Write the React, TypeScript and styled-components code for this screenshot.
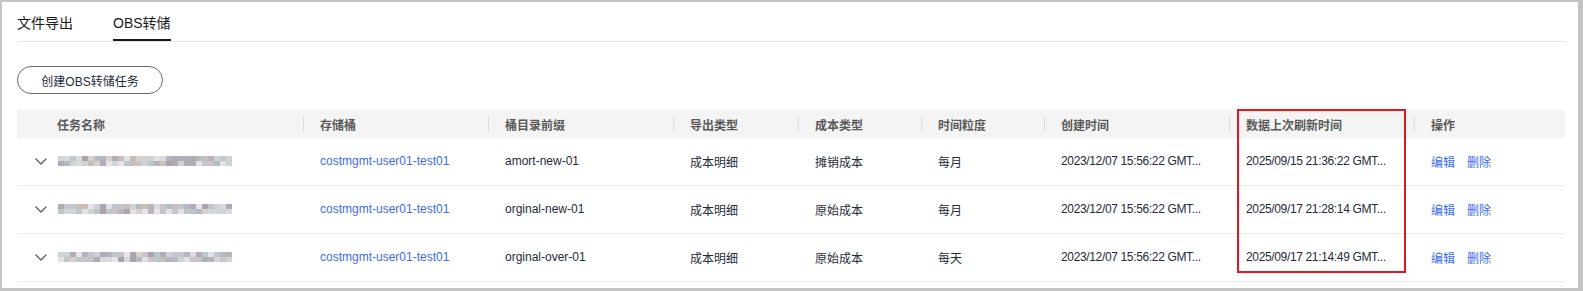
import React from 'react';
import styled, { createGlobalStyle } from 'styled-components';

const GlobalStyle = createGlobalStyle`
  html, body {
    margin: 0;
    padding: 0;
    background: #c4c4c4;
  }
  body {
    font-family: "Liberation Sans", Arial, "Noto Sans CJK SC", sans-serif;
    color: #252b3a;
  }
  * {
    box-sizing: border-box;
  }
`;

const cols = [
  { key: 'name', title: '任务名称', width: 286 },
  { key: 'bucket', title: '存储桶', width: 185 },
  { key: 'prefix', title: '桶目录前缀', width: 185 },
  { key: 'exportType', title: '导出类型', width: 125 },
  { key: 'costType', title: '成本类型', width: 123 },
  { key: 'period', title: '时间粒度', width: 123 },
  { key: 'created', title: '创建时间', width: 185 },
  { key: 'refreshed', title: '数据上次刷新时间', width: 185 },
  { key: 'ops', title: '操作', width: 151 },
];

const rows = [
  {
    seed: 3,
    prefix: 'amort-new-01',
    costType: '摊销成本',
    period: '每月',
    refreshed: '2025/09/15 21:36:22 GMT...',
  },
  {
    seed: 11,
    prefix: 'orginal-new-01',
    costType: '原始成本',
    period: '每月',
    refreshed: '2025/09/17 21:28:14 GMT...',
  },
  {
    seed: 29,
    prefix: 'orginal-over-01',
    costType: '原始成本',
    period: '每天',
    refreshed: '2025/09/17 21:14:49 GMT...',
  },
];

const palette = [
  '#b9b3bd', '#c9c4cc', '#aeb0b4', '#d3d6d6', '#bfc7c6', '#c8bfb8',
  '#d9d9de', '#a9a4ad', '#cfd3d8', '#e2e2e2', '#b7bcc4', '#d6d1cc',
  '#c2c6cc', '#e6e4e8', '#b2aab5', '#cdd5d4',
];

// pseudo-random mosaic for the masked task names
const mosaic = (seed: number) => {
  let s = seed * 9301 + 49297;
  const next = () => {
    s = (s * 9301 + 49297) % 233280;
    return s / 233280;
  };
  return Array.from({ length: 29 }, () => [
    palette[Math.floor(next() * palette.length)],
    palette[Math.floor(next() * palette.length)],
  ]);
};

const App = () => {
  return (
    <>
      <GlobalStyle />
      <Frame>
        <TabBar>
          <Tab>文件导出</Tab>
          <Tab $active>OBS转储</Tab>
        </TabBar>
        <CreateButton>创建OBS转储任务</CreateButton>
        <TableWrap>
          <HeadRow>
            {cols.map((c, i) => (
              <HeadCell key={c.key} $w={c.width} $first={i === 0}>
                {c.title}
              </HeadCell>
            ))}
          </HeadRow>
          {rows.map((r) => (
            <Row key={r.seed}>
              <Cell $w={cols[0].width} $first>
                <Chevron width="12" height="7" viewBox="0 0 12 7">
                  <polyline points="1,1 6,6 11,1" />
                </Chevron>
                <Masked>
                  {mosaic(r.seed).map(([top, bottom], i) => (
                    <MaskCol key={i}>
                      <MaskPixel $c={top} />
                      <MaskPixel $c={bottom} />
                    </MaskCol>
                  ))}
                </Masked>
              </Cell>
              <Cell $w={cols[1].width}>
                <Link>costmgmt-user01-test01</Link>
              </Cell>
              <Cell $w={cols[2].width}>{r.prefix}</Cell>
              <Cell $w={cols[3].width}>成本明细</Cell>
              <Cell $w={cols[4].width}>{r.costType}</Cell>
              <Cell $w={cols[5].width}>{r.period}</Cell>
              <Cell $w={cols[6].width}>
                <TimeText>2023/12/07 15:56:22 GMT...</TimeText>
              </Cell>
              <Cell $w={cols[7].width}>
                <TimeText>{r.refreshed}</TimeText>
              </Cell>
              <Cell $w={cols[8].width}>
                <Ops>
                  <Link>编辑</Link>
                  <Link>删除</Link>
                </Ops>
              </Cell>
            </Row>
          ))}
          <Highlight />
        </TableWrap>
      </Frame>
    </>
  );
};

export default App;

const Frame = styled.div`
  margin: 2px 5px 0 2px;
  height: 286px;
  background: #ffffff;
  padding: 0 11px 0 15px;
  overflow: hidden;
`;

const TabBar = styled.div`
  display: flex;
  gap: 40px;
  height: 40px;
  border-bottom: 1px solid #e6e6e6;
`;

const Tab = styled.div<{ $active?: boolean }>`
  display: flex;
  align-items: center;
  height: 39px;
  padding-top: 2px;
  font-size: 14px;
  color: #191919;
  border-bottom: 2px solid ${(p) => (p.$active ? '#191919' : 'transparent')};
`;

const CreateButton = styled.button`
  display: flex;
  align-items: center;
  justify-content: center;
  margin-top: 24px;
  width: 146px;
  height: 28px;
  padding: 0;
  border: 1px solid #6b6b6b;
  border-radius: 14px;
  background: #ffffff;
  color: #252b3a;
  font-size: 12px;
  font-family: "Liberation Sans", Arial, "Noto Sans CJK SC", sans-serif;
`;

const TableWrap = styled.div`
  position: relative;
  margin-top: 16px;
  width: 1548px;
`;

const HeadRow = styled.div`
  display: flex;
  height: 28px;
  background: #f4f4f4;
`;

const HeadCell = styled.div<{ $w: number; $first?: boolean }>`
  position: relative;
  display: flex;
  align-items: center;
  width: ${(p) => p.$w}px;
  flex: none;
  padding-left: ${(p) => (p.$first ? 40 : 17)}px;
  font-size: 12px;
  font-weight: bold;
  color: #595959;
  white-space: nowrap;
  &::after {
    content: '';
    display: ${(p) => (p.$first ? 'none' : 'block')};
    position: absolute;
    left: 0;
    top: 6px;
    height: 16px;
    width: 1px;
    background: #dcdcdc;
  }
`;

const Row = styled.div`
  display: flex;
  height: 48px;
  border-bottom: 1px solid #ebebeb;
`;

const Cell = styled.div<{ $w: number; $first?: boolean }>`
  display: flex;
  align-items: center;
  width: ${(p) => p.$w}px;
  flex: none;
  padding-left: ${(p) => (p.$first ? 18 : 17)}px;
  padding-bottom: 1px;
  font-size: 12px;
  color: #252b3a;
  white-space: nowrap;
`;

const Chevron = styled.svg`
  flex: none;
  fill: none;
  stroke: #6b6f7a;
  stroke-width: 1.6;
  stroke-linecap: round;
  stroke-linejoin: round;
`;

const Masked = styled.div`
  display: flex;
  margin-left: 11px;
  filter: blur(0.4px);
`;

const MaskCol = styled.div`
  display: flex;
  flex-direction: column;
`;

const MaskPixel = styled.div<{ $c: string }>`
  width: 6px;
  height: 5px;
  background: ${(p) => p.$c};
`;

const Link = styled.span`
  color: #3e6bea;
  cursor: pointer;
`;

const TimeText = styled.span`
  letter-spacing: -0.35px;
`;

const Ops = styled.div`
  display: flex;
  gap: 12px;
`;

const Highlight = styled.div`
  position: absolute;
  left: 1220px;
  top: -1px;
  width: 169px;
  height: 164px;
  border: 2px solid #e5161d;
  pointer-events: none;
`;
